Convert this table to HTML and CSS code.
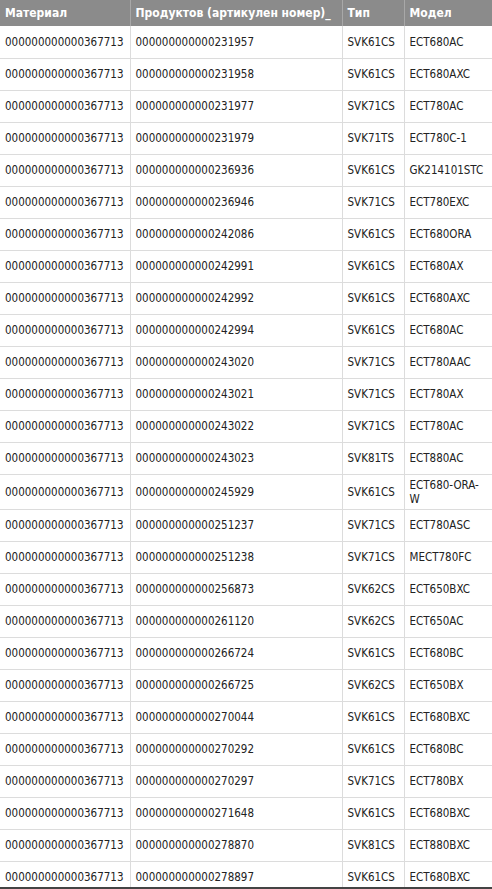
FILE: index.html
```html
<!DOCTYPE html>
<html lang="bg">
	<head>
		<meta charset="UTF-8" />
		<title>Модели</title>
		<link rel="stylesheet" href="styles.css">
	</head>
	<body>
		<table class="models">
			<colgroup>
				<col class="col-mat" />
				<col class="col-prod" />
				<col class="col-type" />
				<col class="col-model" />
			</colgroup>
			<thead>
				<tr>
					<th>Материал</th>
					<th>Продуктов (артикулен номер)_</th>
					<th>Тип</th>
					<th>Модел</th>
				</tr>
			</thead>
			<tbody id="rows"></tbody>
		</table>
		<div class="edge"></div>

		<script>
			const rows = [
				['231957', 'SVK61CS', 'ECT680AC'],
				['231958', 'SVK61CS', 'ECT680AXC'],
				['231977', 'SVK71CS', 'ECT780AC'],
				['231979', 'SVK71TS', 'ECT780C-1'],
				['236936', 'SVK61CS', 'GK214101STC'],
				['236946', 'SVK71CS', 'ECT780EXC'],
				['242086', 'SVK61CS', 'ECT680ORA'],
				['242991', 'SVK61CS', 'ECT680AX'],
				['242992', 'SVK61CS', 'ECT680AXC'],
				['242994', 'SVK61CS', 'ECT680AC'],
				['243020', 'SVK71CS', 'ECT780AAC'],
				['243021', 'SVK71CS', 'ECT780AX'],
				['243022', 'SVK71CS', 'ECT780AC'],
				['243023', 'SVK81TS', 'ECT880AC'],
				['245929', 'SVK61CS', 'ECT680-ORA-W'],
				['251237', 'SVK71CS', 'ECT780ASC'],
				['251238', 'SVK71CS', 'MECT780FC'],
				['256873', 'SVK62CS', 'ECT650BXC'],
				['261120', 'SVK62CS', 'ECT650AC'],
				['266724', 'SVK61CS', 'ECT680BC'],
				['266725', 'SVK62CS', 'ECT650BX'],
				['270044', 'SVK61CS', 'ECT680BXC'],
				['270292', 'SVK61CS', 'ECT680BC'],
				['270297', 'SVK71CS', 'ECT780BX'],
				['271648', 'SVK61CS', 'ECT680BXC'],
				['278870', 'SVK81CS', 'ECT880BXC'],
				['278897', 'SVK61CS', 'ECT680BXC']
			];

			const body = document.getElementById('rows');
			rows.forEach(([prod, type, model]) => {
				const tr = document.createElement('tr');
				[
					'000000000000367713',
					'000000000000' + prod,
					type,
					model
				].forEach((text) => {
					const td = document.createElement('td');
					td.textContent = text;
					tr.appendChild(td);
				});
				body.appendChild(tr);
			});
		</script>
	</body>
</html>
```

FILE: styles.css
```css
body {
	margin: 0;
	padding: 0;
	background: #fff;
	font-family: 'DejaVu Sans Condensed', 'DejaVu Sans', sans-serif;
	font-size: 11.5px;
	color: #222;
}

.models {
	width: 492px;
	border-collapse: collapse;
	table-layout: fixed;
}

.col-mat {
	width: 130px;
}

.col-prod {
	width: 212px;
}

.col-type {
	width: 62px;
}

.col-model {
	width: 88px;
}

.models th {
	height: 26px;
	padding: 0 5px;
	background: #8b8b8b;
	color: #fff;
	font-size: 12px;
	font-weight: bold;
	text-align: left;
	white-space: nowrap;
	overflow: hidden;
	border-left: 1px solid #a8a8a8;
	box-sizing: border-box;
}

.models th:first-child {
	border-left: none;
}

.models td {
	height: 32px;
	padding: 3px 5px;
	line-height: 14px;
	border-bottom: 1px solid #dcdcdc;
	border-left: 1px solid #dcdcdc;
	word-wrap: break-word;
	box-sizing: border-box;
}

.models td:first-child {
	border-left: none;
}

.edge {
	position: fixed;
	left: 0;
	right: 0;
	bottom: 0;
	height: 2px;
	background: #444;
}
```
